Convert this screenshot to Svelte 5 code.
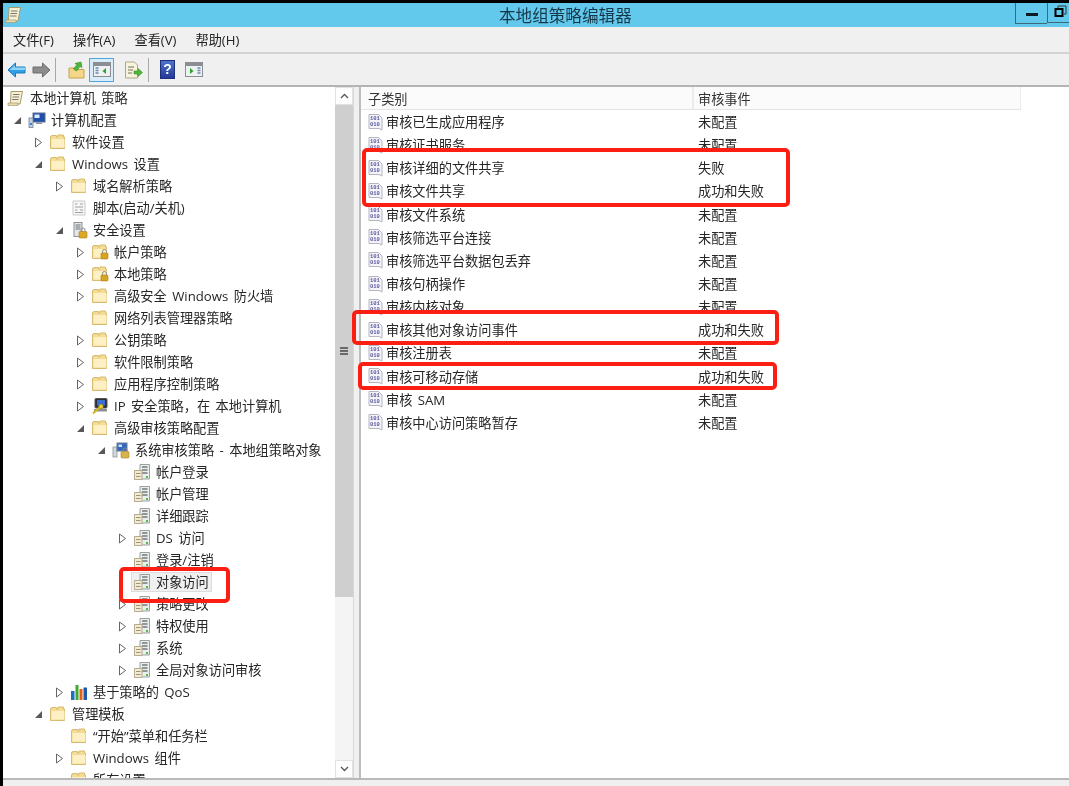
<script>
  const tree = [
    { d: 0, t: '本地计算机 策略', i: 'scroll' },
    { d: 1, t: '计算机配置', i: 'pc', a: 'open' },
    { d: 2, t: '软件设置', i: 'folder', a: 'closed' },
    { d: 2, t: 'Windows 设置', i: 'folder', a: 'open' },
    { d: 3, t: '域名解析策略', i: 'folder', a: 'closed' },
    { d: 3, t: '脚本(启动/关机)', i: 'script' },
    { d: 3, t: '安全设置', i: 'secure', a: 'open' },
    { d: 4, t: '帐户策略', i: 'lockfolder', a: 'closed' },
    { d: 4, t: '本地策略', i: 'lockfolder', a: 'closed' },
    { d: 4, t: '高级安全 Windows 防火墙', i: 'folder', a: 'closed' },
    { d: 4, t: '网络列表管理器策略', i: 'folder' },
    { d: 4, t: '公钥策略', i: 'folder', a: 'closed' },
    { d: 4, t: '软件限制策略', i: 'folder', a: 'closed' },
    { d: 4, t: '应用程序控制策略', i: 'folder', a: 'closed' },
    { d: 4, t: 'IP 安全策略，在 本地计算机', i: 'ip', a: 'closed' },
    { d: 4, t: '高级审核策略配置', i: 'folder', a: 'open' },
    { d: 5, t: '系统审核策略 - 本地组策略对象', i: 'audit', a: 'open' },
    { d: 6, t: '帐户登录', i: 'server' },
    { d: 6, t: '帐户管理', i: 'server' },
    { d: 6, t: '详细跟踪', i: 'server' },
    { d: 6, t: 'DS 访问', i: 'server', a: 'closed' },
    { d: 6, t: '登录/注销', i: 'server' },
    { d: 6, t: '对象访问', i: 'server', sel: true },
    { d: 6, t: '策略更改', i: 'server', a: 'closed' },
    { d: 6, t: '特权使用', i: 'server', a: 'closed' },
    { d: 6, t: '系统', i: 'server', a: 'closed' },
    { d: 6, t: '全局对象访问审核', i: 'server', a: 'closed' },
    { d: 3, t: '基于策略的 QoS', i: 'chart', a: 'closed' },
    { d: 2, t: '管理模板', i: 'folder', a: 'open' },
    { d: 3, t: '“开始”菜单和任务栏', i: 'folder' },
    { d: 3, t: 'Windows 组件', i: 'folder', a: 'closed' },
    { d: 3, t: '所有设置', i: 'folder' }
  ];

  const rows = [
    ['审核已生成应用程序', '未配置'],
    ['审核证书服务', '未配置'],
    ['审核详细的文件共享', '失败'],
    ['审核文件共享', '成功和失败'],
    ['审核文件系统', '未配置'],
    ['审核筛选平台连接', '未配置'],
    ['审核筛选平台数据包丢弃', '未配置'],
    ['审核句柄操作', '未配置'],
    ['审核内核对象', '未配置'],
    ['审核其他对象访问事件', '成功和失败'],
    ['审核注册表', '未配置'],
    ['审核可移动存储', '成功和失败'],
    ['审核 SAM', '未配置'],
    ['审核中心访问策略暂存', '未配置']
  ];

  const menus = ['文件(F)', '操作(A)', '查看(V)', '帮助(H)'];
</script>

{#snippet icon(kind)}
  <svg class="ico" width="18" height="18" viewBox="0 0 18 18">
    {#if kind === 'folder' || kind === 'lockfolder'}
      <path d="M1.500 15.500V3.500h1V2.500h5v1.500h1.500V2h5.500v2h1v11.500z" fill="#f5dc96" stroke="#d8bb6e" />
      <path d="M2.500 6h13v8.500h-13z" fill="#fdf0c4" />
      {#if kind === 'lockfolder'}
        <rect x="10" y="10" width="7" height="6" rx="1" fill="#d9a520" stroke="#a97c10" stroke-width=".6" />
        <path d="M11.500 10V8.500a2 2 0 0 1 4 0V10" fill="none" stroke="#8c8c8c" />
      {/if}
    {:else if kind === 'scroll'}
      <path d="M4 2.500h11.500L13 15H2l1.500-1z" fill="#f6efd3" stroke="#a89a6e" />
      <path d="M6 5.500h6.500M5.500 8h6.500M5 10.500h6.500" stroke="#7d7a6c" />
      <path d="M1 14h10v2.500H1z" fill="#e8dcae" stroke="#a89a6e" stroke-width=".7" />
    {:else if kind === 'pc'}
      <rect x="5" y="2" width="12" height="9" fill="#1f4fae" stroke="#5c6f8a" />
      <path d="M6.500 3.500h5v3.500h-5z" fill="#dcecfc" />
      <path d="M8 11.500h6v1.500H8z" fill="#8a95a5" />
      <rect x="1" y="7" width="4" height="9.500" fill="#c7d0dc" stroke="#6d7d94" stroke-width=".8" />
      <rect x="2" y="12" width="2" height="2" fill="#3d7fd9" />
    {:else if kind === 'script'}
      <path d="M3 2h12v14H3z" fill="#f7f7f7" stroke="#c8c8c8" />
      <path d="M5 5h2.500M10 5h3M5 8h8M5 11h2.500M10 11h3M5 13.500h8" stroke="#a0a0a0" />
    {:else if kind === 'secure'}
      <rect x="4" y="1.500" width="8" height="14" fill="#e4e7ea" stroke="#8d9298" />
      <path d="M5.500 4h5M5.500 6h5M5.500 8h5" stroke="#6a7076" />
      <rect x="9" y="10.500" width="8" height="6.500" rx="1" fill="#dca828" stroke="#a97c10" stroke-width=".6" />
      <path d="M11 10.500V9a2 2 0 0 1 4 0v1.500" fill="none" stroke="#8c8c8c" />
    {:else if kind === 'ip'}
      <rect x="4" y="1.500" width="12" height="9.500" rx="1" fill="#2b2f36" stroke="#555" />
      <rect x="6" y="3" width="8" height="5.500" fill="#3c6fd0" />
      <path d="M3 12h13v2.500H3z" fill="#8b8f96" />
      <path d="M2 16.500 9 10" stroke="#d6b820" stroke-width="2.200" />
      <circle cx="10" cy="9.500" r="2.200" fill="#e9cf3a" stroke="#9d8a13" stroke-width=".6" />
    {:else if kind === 'audit'}
      <rect x="1" y="6" width="4" height="10" fill="#d5d8dc" stroke="#8c939b" stroke-width=".8" />
      <rect x="5" y="2" width="10" height="8" fill="#3167c2" stroke="#6d7d94" />
      <path d="M6.500 3.500h3.500v2.500H6.500z" fill="#cfe4fb" />
      <rect x="9" y="10.500" width="8" height="6.500" rx="1" fill="#d9b24a" stroke="#a9842a" stroke-width=".6" />
      <path d="M11 10.500V9a2 2 0 0 1 4 0v1.500" fill="none" stroke="#8c8c8c" />
    {:else if kind === 'server'}
      <path d="M7 1.500h9.500v14.500H7z" fill="#eceded" stroke="#9a9fa3" />
      <path d="M9 4h5.500M9 7h5.500M9 10h5.500" stroke="#73797d" stroke-width="1.300" />
      <path d="M1.500 7.500H9v9H1.500z" fill="#f2ebd2" stroke="#b5ab8d" />
      <path d="M3 10.500h4.500M3 13.500h4.500" stroke="#9d9579" />
      <rect x="13" y="13" width="2" height="2" fill="#4fbf3b" />
    {:else if kind === 'chart'}
      <rect x="1" y="8" width="3.500" height="9" fill="#1f6fc0" />
      <rect x="5.500" y="2" width="3" height="15" fill="#43a82f" />
      <rect x="9.500" y="6" width="3" height="11" fill="#e2601e" />
      <rect x="13.500" y="4.500" width="3.500" height="12.500" fill="#1c5aa8" />
    {:else if kind === 'binary'}
      <path d="M2 1.500h9.500L15 5v12l-3-1.500H2z" fill="#f4f4f8" stroke="#b4b4c0" />
      <text x="3" y="7" class="bits">101</text>
      <text x="3" y="13" class="bits">010</text>
    {/if}
  </svg>
{/snippet}

<div class="window">
  <header class="title">
    <svg class="appico" width="18" height="18" viewBox="0 0 18 18">
      <path d="M4 1.500h11.500L13 15H2l1.500-1z" fill="#f6efd3" stroke="#a89a6e" />
      <path d="M6 5h6.500M5.500 7.500h6.500M5 10h6.500" stroke="#7d7a6c" />
      <path d="M1 14h10v2.500H1z" fill="#e8dcae" stroke="#a89a6e" stroke-width=".7" />
    </svg>
    <h1>本地组策略编辑器</h1>
    <div class="winbtns">
      <div class="winbtn"><span class="minim"></span></div>
      <div class="winbtn restore">
        <svg width="13" height="13" viewBox="0 0 13 13">
          <path d="M4 3V1h8v8h-2" fill="none" stroke="#333" />
          <rect x="1.500" y="4" width="7" height="7" fill="none" stroke="#000" stroke-width="2" />
        </svg>
      </div>
    </div>
  </header>

  <nav class="menu">
    {#each menus as m}
      <span>{m}</span>
    {/each}
  </nav>

  <div class="toolbar">
    <svg class="tb back" width="19" height="16" viewBox="0 0 19 16">
      <path d="M8.500 1 1 8l7.500 7v-4H18V5H8.500z" fill="#2f9fe8" stroke="#1d79bd" />
      <path d="M8 3 2.500 8H18V5.500H8z" fill="#8fd2f8" />
    </svg>
    <svg class="tb fwd" width="19" height="16" viewBox="0 0 19 16">
      <path d="M10.500 1 18 8l-7.500 7v-4H1V5h9.500z" fill="#8d8d8d" stroke="#6c6c6c" />
    </svg>
    <i class="sep"></i>
    <svg class="tb up" width="17" height="18" viewBox="0 0 17 18">
      <path d="M1 17V7h5l1 1.500h9V17z" fill="#f3d68a" stroke="#c7a24e" />
      <path d="M5.500 8 9 3.500 7 2.500l6-1.500 1 5.500-2-1L8.500 10z" fill="#4fb53a" stroke="#2f8a22" stroke-width=".6" />
    </svg>
    <div class="tbactive">
      <svg width="18" height="15" viewBox="0 0 18 15">
        <rect x=".5" y=".5" width="17" height="14" fill="#eef1f4" stroke="#8b8f94" />
        <path d="M1 1h16v3H1z" fill="#8b8f94" />
        <path d="M2.500 6h3M2.500 8.500h3M2.500 11h3" stroke="#6d88ad" stroke-width="1.500" />
        <path d="M13 6v6L9.500 9z" fill="#2aa72a" />
      </svg>
    </div>
    <svg class="tb export" width="19" height="18" viewBox="0 0 19 18">
      <path d="M1.500 1h9l3 3v13h-12z" fill="#f8f3dc" stroke="#aaa58c" />
      <path d="M4 6h6M4 9h5M4 12h4" stroke="#77735f" />
      <path d="M10 10h4V7.500L18.500 11.500 14 15.500V13h-4z" fill="#52b83a" stroke="#35902a" stroke-width=".6" />
    </svg>
    <i class="sep second"></i>
    <div class="help">?</div>
    <svg class="tb pane" width="18" height="15" viewBox="0 0 18 15">
      <rect x=".5" y=".5" width="17" height="14" fill="#eef1f4" stroke="#8b8f94" />
      <path d="M1 1h16v3H1z" fill="#8b8f94" />
      <path d="M12.500 6h3M12.500 8.500h3M12.500 11h3" stroke="#6d88ad" stroke-width="1.500" />
      <path d="M5 6v6l3.500-3z" fill="#2aa72a" />
    </svg>
  </div>

  <main class="panes">
    <section class="treepane">
      <div class="tree">
        {#each tree as n}
          <div class="node" style={`padding-left:${n.d * 21 + 7}px`}>
            <span class="arrow">
              {#if n.a === 'open'}
                <svg width="9" height="9" viewBox="0 0 9 9"><path d="M8 1v7H1z" fill="#595959" /></svg>
              {:else if n.a === 'closed'}
                <svg width="9" height="11" viewBox="0 0 9 11"><path d="M1.500 1v9l6-4.500z" fill="#fff" stroke="#666" /></svg>
              {/if}
            </span>
            <span class="item" class:sel={n.sel}>
              {@render icon(n.i)}
              <span class="label">{n.t}</span>
            </span>
          </div>
        {/each}
      </div>
      <div class="scroll">
        <div class="sbtn">
          <svg width="9" height="6" viewBox="0 0 9 6"><path d="M1 5 4.500 1.500 8 5" fill="none" stroke="#555" stroke-width="1.300" /></svg>
        </div>
        <div class="thumb"><span></span><span></span><span></span></div>
        <div class="rest"></div>
        <div class="sbtn">
          <svg width="9" height="6" viewBox="0 0 9 6"><path d="M1 1 4.500 4.500 8 1" fill="none" stroke="#555" stroke-width="1.300" /></svg>
        </div>
      </div>
    </section>

    <div class="split"></div>

    <section class="list">
      <div class="head">
        <div class="c1">子类别</div>
        <div class="c2">审核事件</div>
      </div>
      {#each rows as r}
        <div class="row">
          <div class="name">{@render icon('binary')}<span>{r[0]}</span></div>
          <div class="val">{r[1]}</div>
        </div>
      {/each}
    </section>
  </main>

  <div class="mark m1"></div>
  <div class="mark m2"></div>
  <div class="mark m3"></div>
  <div class="mark m4"></div>
</div>

<style>
  :global(body) {
    background: #f0f0f0;
    overflow: hidden;
  }
  .window {
    position: relative;
    width: 1069px;
    height: 786px;
    box-sizing: border-box;
    border-top: 3px solid #000;
    border-left: 3px solid #000;
    background: #f0f0f0;
    display: flex;
    flex-direction: column;
    overflow: hidden;
    color: #262626;
    font-family: "Open Sans", "Noto Sans CJK SC", sans-serif;
    font-size: 13.2px;
    word-spacing: 2px;
    filter: blur(0.4px);
  }
  .title {
    height: 24px;
    flex: none;
    background: #62c9ec;
    display: flex;
    align-items: flex-start;
  }
  .appico {
    margin: 3px 0 0 2px;
  }
  h1 {
    margin: 0 0 0 476px;
    font-size: 16.6px;
    font-weight: 400;
    line-height: 25px;
    color: #17384a;
  }
  .winbtns {
    margin-left: auto;
    display: flex;
    height: 21px;
  }
  .winbtn {
    width: 31px;
    height: 20px;
    border: 1px solid #3f6878;
    border-top: 0;
    border-right: 0;
    display: flex;
    align-items: center;
    justify-content: center;
  }
  .winbtn.restore {
    width: 22px;
    justify-content: flex-start;
    padding: 0 0 3px 6px;
    box-sizing: border-box;
  }
  .minim {
    width: 12px;
    height: 3px;
    margin-top: 3px;
    background: #0c1b22;
  }
  .menu {
    height: 25px;
    flex: none;
    display: flex;
    gap: 19px;
    align-items: center;
    padding-left: 10px;
    border-bottom: 2px solid #d2d2d2;
    color: #222;
  }
  .toolbar {
    height: 31px;
    flex: none;
    display: flex;
    align-items: center;
    border-bottom: 2px solid #b4b4b4;
  }
  .tb {
    flex: none;
  }
  .back {
    margin-left: 4px;
  }
  .fwd {
    margin-left: 6px;
  }
  .sep {
    width: 1px;
    height: 24px;
    background: #a8a8a8;
    margin-left: 4px;
  }
  .up {
    margin-left: 12px;
  }
  .tbactive {
    width: 23px;
    height: 22px;
    margin-left: 4px;
    border: 1px solid #4ea6dc;
    background: #d8ecf9;
    display: flex;
    align-items: center;
    justify-content: center;
  }
  .export {
    margin-left: 10px;
  }
  .sep.second {
    margin-left: 5px;
  }
  .help {
    width: 13px;
    height: 17px;
    margin-left: 11px;
    background: linear-gradient(#4f74c9, #23399a);
    border: 1px solid #1e2f7d;
    color: #fff;
    font: 700 14px/17px "Liberation Sans", sans-serif;
    text-align: center;
  }
  .pane {
    margin-left: 10px;
  }
  .panes {
    flex: 1;
    min-height: 0;
    display: flex;
    border-bottom: 2px solid #b9b9b9;
    margin-bottom: 6px;
    background: #fff;
  }
  .treepane {
    width: 351px;
    flex: none;
    display: flex;
    background: #fff;
  }
  .tree {
    flex: 1;
    min-width: 0;
    overflow: hidden;
  }
  .node {
    height: 22px;
    display: flex;
    align-items: center;
    position: relative;
    white-space: nowrap;
    margin-left: -3px;
  }
  .arrow {
    position: absolute;
    margin-left: -17px;
    width: 12px;
    display: flex;
    justify-content: center;
  }
  .item {
    display: flex;
    align-items: center;
    height: 20px;
    box-sizing: border-box;
    margin-left: -2px;
    padding: 0 2px 0 1px;
    border: 1px solid transparent;
  }
  .item.sel {
    background: #f0f0f0;
    border-color: #dcdcdc;
  }
  .ico {
    flex: none;
  }
  .label {
    margin-left: 5px;
    line-height: 18px;
  }
  .scroll {
    width: 18px;
    flex: none;
    display: flex;
    flex-direction: column;
    background: #f4f4f4;
    border-right: 1px solid #d8d8d8;
  }
  .sbtn {
    height: 18px;
    flex: none;
    background: #fff;
    border: 1px solid #e2e2e2;
    box-sizing: border-box;
    display: flex;
    align-items: center;
    justify-content: center;
  }
  .thumb {
    height: 492px;
    flex: none;
    background: #cfcfcf;
    display: flex;
    flex-direction: column;
    align-items: center;
    justify-content: center;
    gap: 1px;
  }
  .thumb span {
    width: 8px;
    height: 2px;
    background: #6a6a6a;
  }
  .rest {
    flex: 1;
  }
  .split {
    width: 5px;
    flex: none;
    background: #f0f0f0;
    border-right: 2px solid #bdbdbd;
  }
  .list {
    flex: 1;
    min-width: 0;
    background: #fff;
  }
  .head {
    height: 22px;
    display: flex;
    width: 660px;
    background: #fbfbfb;
    border-bottom: 1px solid #e4e4e4;
    line-height: 24px;
    color: #333;
  }
  .c1 {
    width: 333px;
    padding-left: 7px;
    box-sizing: border-box;
    border-right: 2px solid #ececec;
  }
  .c2 {
    flex: 1;
    padding-left: 4px;
    border-right: 1px solid #ececec;
  }
  .row {
    height: 23.15px;
    display: flex;
    align-items: center;
  }
  .name {
    width: 337px;
    padding-left: 6px;
    box-sizing: border-box;
    display: flex;
    align-items: center;
    gap: 1px;
  }
  .bits {
    font: 700 5.500px "Liberation Mono", monospace;
    fill: #5a5aa0;
  }
  .mark {
    position: absolute;
    box-sizing: border-box;
    border: 4px solid #fb1f13;
    border-radius: 5px;
  }
  .m1 {
    left: 359px;
    top: 145px;
    width: 428px;
    height: 59px;
  }
  .m2 {
    left: 349px;
    top: 307px;
    width: 427px;
    height: 35px;
  }
  .m3 {
    left: 355px;
    top: 359px;
    width: 419px;
    height: 28px;
  }
  .m4 {
    left: 116px;
    top: 564px;
    width: 111px;
    height: 36px;
  }
</style>
